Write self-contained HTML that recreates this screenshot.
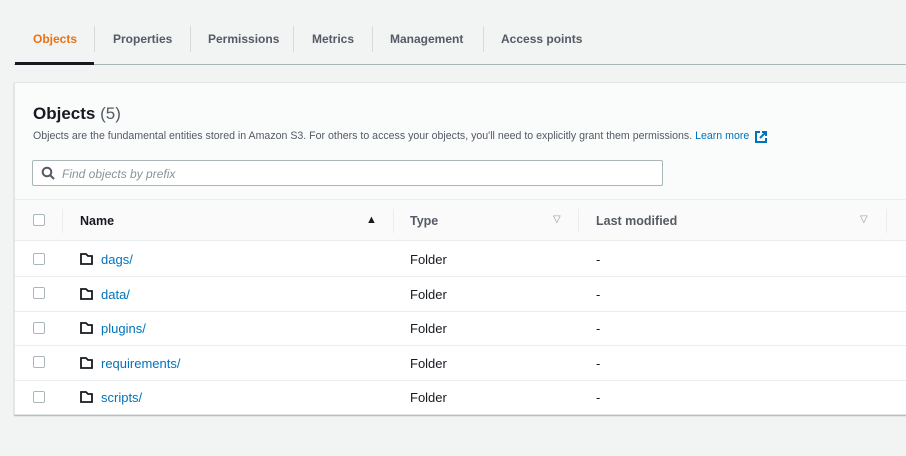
<!DOCTYPE html>
<html><head><style>
*{margin:0;padding:0;box-sizing:border-box}
body{width:906px;height:456px;background:#f2f3f3;font-family:"Liberation Sans",Arial,sans-serif;color:#16191f;position:relative;overflow:hidden}
.a{position:absolute}
.tab{position:absolute;top:32px;font-size:12px;font-weight:bold;color:#545b64}
.sep{position:absolute;top:26px;width:1px;height:26px;background:#d5dbdb}
.cb{position:absolute;width:12px;height:12px;border:1px solid #aab7b8;border-radius:2px;background:#fff}
.link{color:#0073bb}
.cell{position:absolute;font-size:13px}
</style></head><body>
<div class="tab" style="left:33px;color:#ec7211">Objects</div>
<div class="sep" style="left:94px"></div>
<div class="tab" style="left:113px">Properties</div>
<div class="sep" style="left:190px"></div>
<div class="tab" style="left:208px">Permissions</div>
<div class="sep" style="left:293px"></div>
<div class="tab" style="left:312px">Metrics</div>
<div class="sep" style="left:372px"></div>
<div class="tab" style="left:390px">Management</div>
<div class="sep" style="left:483px"></div>
<div class="tab" style="left:501px">Access points</div>
<div class="a" style="left:14px;top:64px;width:892px;height:1px;background:#aab7b8"></div>
<div class="a" style="left:15px;top:62px;width:79px;height:3px;background:#16191f"></div>

<div class="a" style="left:14px;top:82px;width:900px;height:333px;background:#fafbfb;border:1px solid #e2e5e5;box-shadow:0 1px 1px rgba(0,28,36,.3)"></div>
<div class="a" style="left:33px;top:104px;font-size:17px;font-weight:bold">Objects <span style="font-weight:normal;color:#545b64">(5)</span></div>
<div class="a" style="left:33px;top:130px;font-size:10.6px;color:#545b64">Objects are the fundamental entities stored in Amazon S3. For others to access your objects, you'll need to explicitly grant them permissions. <span class="link">Learn more</span></div>
<svg class="a" style="left:754px;top:130px" width="14" height="14" viewBox="0 0 14 14"><path d="M6 2H2v10h10V8M8 2h4v4M12 2L6 8" fill="none" stroke="#0073bb" stroke-width="2"/></svg>
<div class="a" style="left:32px;top:160px;width:631px;height:26px;background:#fff;border:1px solid #aab7b8;border-radius:2px"></div>
<svg class="a" style="left:41px;top:166px" width="14" height="14" viewBox="0 0 14 14"><circle cx="6" cy="6" r="4.3" fill="none" stroke="#545b64" stroke-width="2"/><path d="M9 9l4 4" stroke="#545b64" stroke-width="2"/></svg>
<div class="a" style="left:62px;top:167px;font-size:12px;font-style:italic;color:#879596">Find objects by prefix</div>

<div class="a" style="left:15px;top:199px;width:891px;height:215px;background:#fff;border-top:1px solid #eaeded"></div>
<div class="a" style="left:15px;top:200px;width:891px;height:41px;background:#fafafa;border-bottom:1px solid #eaeded"></div>
<div class="a" style="left:62px;top:209px;width:1px;height:24px;background:#eaeded"></div>
<div class="a" style="left:393px;top:209px;width:1px;height:24px;background:#eaeded"></div>
<div class="a" style="left:578px;top:209px;width:1px;height:24px;background:#eaeded"></div>
<div class="a" style="left:886px;top:209px;width:1px;height:24px;background:#eaeded"></div>
<div class="cb" style="left:33px;top:214px"></div>
<div class="cell" style="left:80px;top:214px;font-weight:bold;font-size:12.5px">Name</div>
<div class="a" style="left:366px;top:214px;font-size:11px">▲</div>
<div class="cell" style="left:410px;top:214px;font-weight:bold;color:#545b64;font-size:12.5px">Type</div>
<div class="a" style="left:553px;top:214px;font-size:10px;color:#879596">▽</div>
<div class="cell" style="left:596px;top:214px;font-weight:bold;color:#545b64;font-size:12.5px">Last modified</div>
<div class="a" style="left:860px;top:214px;font-size:10px;color:#879596">▽</div>

<div class="a" style="left:15px;top:276px;width:891px;height:1px;background:#eaeded"></div>
<div class="a" style="left:15px;top:311px;width:891px;height:1px;background:#eaeded"></div>
<div class="a" style="left:15px;top:345px;width:891px;height:1px;background:#eaeded"></div>
<div class="a" style="left:15px;top:380px;width:891px;height:1px;background:#eaeded"></div>

<div class="cb" style="left:33px;top:253px"></div>
<svg class="a" style="left:80px;top:253px" width="13" height="12"><path d="M1 1h5l2 2h4v8H1z" fill="none" stroke="#16191f" stroke-width="1.8"/></svg>
<div class="cell link" style="left:101px;top:252px">dags/</div>
<div class="cell" style="left:410px;top:252px">Folder</div><div class="cell" style="left:596px;top:252px">-</div>

<div class="cb" style="left:33px;top:287px"></div>
<svg class="a" style="left:80px;top:288px" width="13" height="12"><path d="M1 1h5l2 2h4v8H1z" fill="none" stroke="#16191f" stroke-width="1.8"/></svg>
<div class="cell link" style="left:101px;top:287px">data/</div>
<div class="cell" style="left:410px;top:287px">Folder</div><div class="cell" style="left:596px;top:287px">-</div>

<div class="cb" style="left:33px;top:322px"></div>
<svg class="a" style="left:80px;top:322px" width="13" height="12"><path d="M1 1h5l2 2h4v8H1z" fill="none" stroke="#16191f" stroke-width="1.8"/></svg>
<div class="cell link" style="left:101px;top:321px">plugins/</div>
<div class="cell" style="left:410px;top:321px">Folder</div><div class="cell" style="left:596px;top:321px">-</div>

<div class="cb" style="left:33px;top:356px"></div>
<svg class="a" style="left:80px;top:357px" width="13" height="12"><path d="M1 1h5l2 2h4v8H1z" fill="none" stroke="#16191f" stroke-width="1.8"/></svg>
<div class="cell link" style="left:101px;top:356px">requirements/</div>
<div class="cell" style="left:410px;top:356px">Folder</div><div class="cell" style="left:596px;top:356px">-</div>

<div class="cb" style="left:33px;top:391px"></div>
<svg class="a" style="left:80px;top:391px" width="13" height="12"><path d="M1 1h5l2 2h4v8H1z" fill="none" stroke="#16191f" stroke-width="1.8"/></svg>
<div class="cell link" style="left:101px;top:390px">scripts/</div>
<div class="cell" style="left:410px;top:390px">Folder</div><div class="cell" style="left:596px;top:390px">-</div>
</body></html>
